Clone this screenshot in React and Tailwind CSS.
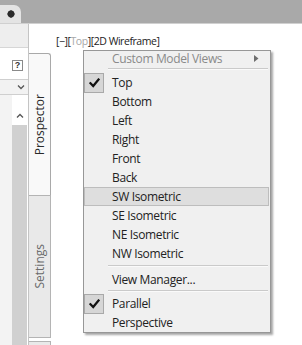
import React from "react";

function Check() {
  return (
    <svg width="11" height="10" viewBox="0 0 11 10" className="block">
      <path d="M1.5 5.2 L4.2 8 L9.5 1.5" fill="none" stroke="#111" strokeWidth="2.2" strokeLinecap="square" />
    </svg>
  );
}

function Item({ label, checked, hover }) {
  return (
    <div className={"relative flex items-center h-[19px] mr-[1px] " + (hover ? "bg-[#dedede] border border-[#bdbdbd]" : "border border-transparent")}>
      {checked && (
        <div className="absolute left-[-1px] top-[-1px] w-[20px] h-[20px] bg-[#d6d6d6] border border-[#a9a9a9] flex items-center justify-center">
          <Check />
        </div>
      )}
      <span className="pl-[27px] text-[12px] leading-none text-[#222]">{label}</span>
    </div>
  );
}

function Sep({ top, bottom }) {
  return (
    <div className={"ml-[24px] mr-[2px] " + top + " " + bottom}>
      <div className="h-px bg-[#cacaca]" />
      <div className="h-px bg-[#fafafa]" />
    </div>
  );
}

export default function App() {
  return (
    <div className="relative w-[302px] h-[345px] overflow-hidden bg-white font-['Open_Sans',sans-serif]">
      {/* top bar */}
      <div className="h-[23px] bg-[#a9a9a9] flex items-end">
        <div className="w-[21px] h-[18px] bg-[#e4e4e4] rounded-tr-[7px] flex items-center justify-center">
          <svg width="10" height="10" viewBox="0 0 10 10">
            <path d="M5 1 V9 M1 5 H9" stroke="#444" strokeWidth="1.2" />
            <circle cx="5" cy="5" r="3.4" fill="#2a2a2a" />
          </svg>
        </div>
      </div>
      <div className="h-px bg-[#d0d0d0]" />

      <div className="flex h-[321px]">
        {/* palette content */}
        <div className="w-[28px] flex flex-col">
          <div className="h-[24px] bg-[#eeeeee] border-b border-[#d6d6d6]" />
          <div className="h-[31px] bg-white pt-[12px] pl-[12px]">
            <div className="w-[11px] h-[11px] border border-[#8a8a8a] bg-white flex items-center justify-center text-[9px] leading-none font-bold text-[#333] font-['Liberation_Sans',sans-serif]">?</div>
          </div>
          <div className="h-[16px] bg-[#f2f2f2] border-y border-[#cfcfcf] flex items-center justify-end pr-[3px]">
            <svg width="8" height="6" viewBox="0 0 8 6">
              <path d="M1 1.5 L4 4.5 L7 1.5" fill="none" stroke="#555" strokeWidth="1.3" />
            </svg>
          </div>
          <div className="flex-1 flex">
            <div className="w-[12px] bg-[#f3f3f3]" />
            <div className="w-[15px] flex flex-col">
              <div className="h-[30px] bg-white flex items-end justify-center pb-[6px]">
                <svg width="8" height="6" viewBox="0 0 8 6">
                  <path d="M1 4.5 L4 1.5 L7 4.5" fill="none" stroke="#555" strokeWidth="1.3" />
                </svg>
              </div>
              <div className="flex-1 bg-[#d0d0d0]" />
            </div>
            <div className="w-[1px] bg-white" />
          </div>
        </div>

        {/* tab strip */}
        <div className="w-[23px] flex flex-col border-l border-[#c4c4c4]">
          <div className="h-[29px] bg-white" />
          <div className="h-[142px] bg-[#f9f9f9] border-t border-r border-[#a9a9a9] rounded-tr-[3px] flex items-center justify-center">
            <span className="[writing-mode:vertical-rl] rotate-180 text-[12px] leading-none text-[#2a2a2a]">Prospector</span>
          </div>
          <div className="h-[143px] bg-[#e9e9e9] border border-l-0 border-[#b4b4b4] flex items-center justify-center">
            <span className="[writing-mode:vertical-rl] rotate-180 text-[12px] leading-none text-[#6a6a6a]">Settings</span>
          </div>
          <div className="h-[3px]" />
          <div className="flex-1 bg-[#e9e9e9] border-t border-r border-[#b4b4b4]" />
        </div>

        {/* viewport */}
        <div className="flex-1 pl-[5px] pt-[10px]">
          <div className="text-[10.5px] leading-[14px] text-[#222] tracking-[-0.45px]">
            [−][<span className="text-[#a8a8a8]">Top</span>][2D Wireframe]
          </div>
        </div>
      </div>

      {/* context menu */}
      <div className="absolute left-[83px] top-[50px] w-[188px] bg-[#f0f0f0] border border-[#979797] shadow-[2px_2px_2px_rgba(0,0,0,0.35)] tracking-[-0.35px]">
        <div className="relative flex items-center h-[16px]">
          <span className="pl-[28px] text-[12px] leading-none text-[#8a8a8a]">Custom Model Views</span>
          <svg width="5" height="7" viewBox="0 0 5 7" className="absolute right-[11px] top-[4px]">
            <path d="M0 0 L4.5 3.5 L0 7 Z" fill="#6e6e6e" />
          </svg>
        </div>
        <Sep top="mt-[1px]" bottom="mb-[3px]" />
        <Item label="Top" checked />
        <Item label="Bottom" />
        <Item label="Left" />
        <Item label="Right" />
        <Item label="Front" />
        <Item label="Back" />
        <Item label="SW Isometric" hover />
        <Item label="SE Isometric" />
        <Item label="NE Isometric" />
        <Item label="NW Isometric" />
        <Sep top="mt-[2px]" bottom="mb-[3px]" />
        <Item label="View Manager..." />
        <Sep top="mt-[1px]" bottom="mb-[2px]" />
        <Item label="Parallel" checked />
        <Item label="Perspective" />
      </div>
    </div>
  );
}
